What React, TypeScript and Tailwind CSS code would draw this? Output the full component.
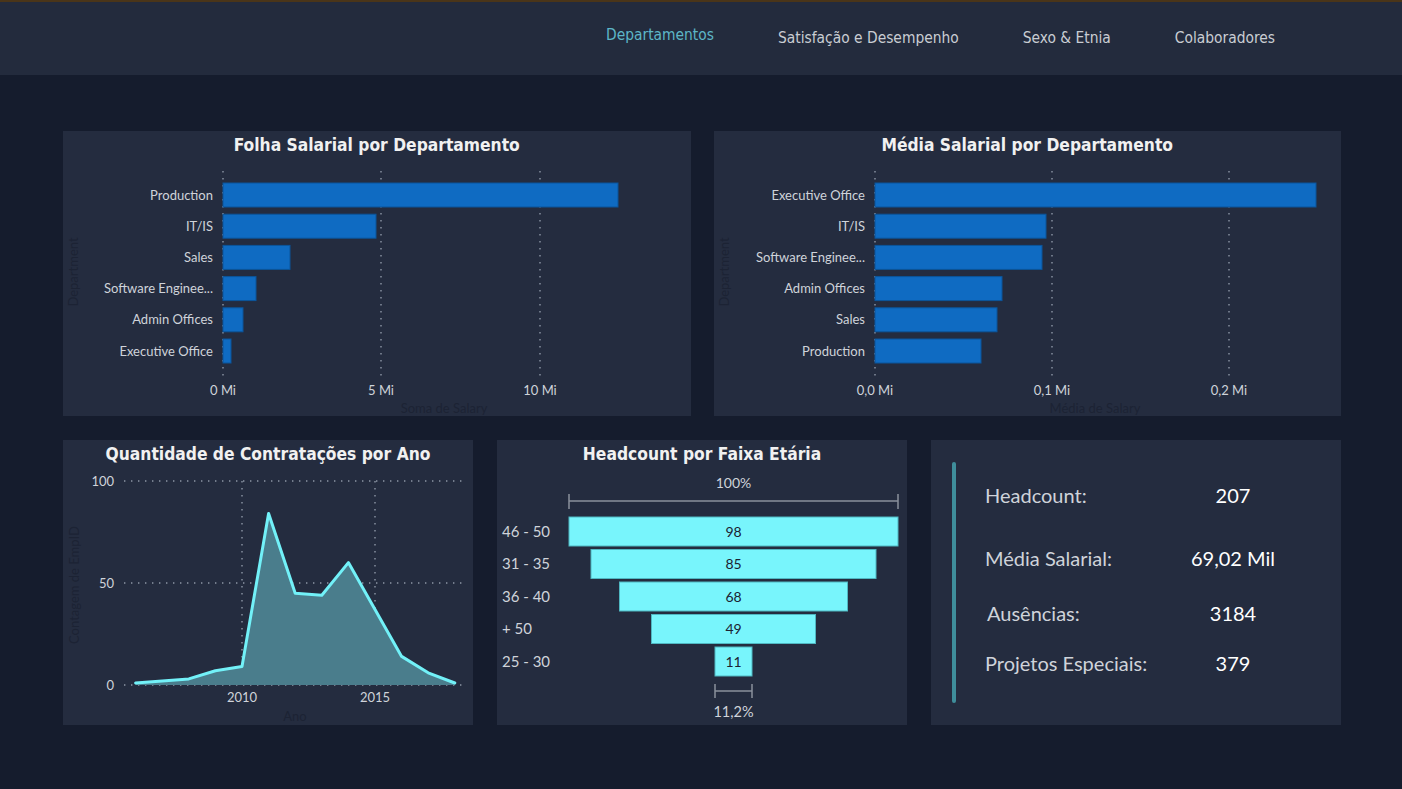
import React from "react";

const TITLE = "font-['DejaVu_Sans_Condensed','DejaVu_Sans',sans-serif] font-stretch-condensed";
const BODY = "font-['Lato','Open_Sans',sans-serif]";

type Bar = { label: string; w: number };

function HBarChart({ data, ticks, start, labelEnd, axisTitle }: {
  data: Bar[];
  ticks: { x: number; label: string }[];
  start: number;
  labelEnd: number;
  axisTitle: string;
}) {
  return (
    <svg width="628" height="255" className={BODY}>
      {ticks.map((t) => (
        <line key={t.label} x1={t.x} x2={t.x} y1={10} y2={216} stroke="#8d96a6" strokeWidth="1.4" strokeDasharray="1.4 5.6" />
      ))}
      {data.map((d, i) => {
        const y = 22 + i * 31.2;
        return (
          <g key={d.label}>
            <rect x={start} y={y} width={d.w} height={24} fill="#0f6bc2" stroke="#0b559b" strokeWidth="1" />
            <text x={labelEnd} y={y + 16.5} textAnchor="end" fontSize="13" fill="#cfd3da">{d.label}</text>
          </g>
        );
      })}
      {ticks.map((t) => (
        <text key={t.label} x={t.x} y={234} textAnchor="middle" fontSize="13" fill="#cfd3da">{t.label}</text>
      ))}
      <text x={381} y={252} textAnchor="middle" fontSize="13" fill="#1c2334">{axisTitle}</text>
      <text x={0} y={0} transform="translate(15,111) rotate(-90)" textAnchor="middle" fontSize="13" fill="#1c2334">Department</text>
    </svg>
  );
}

function Panel({ title, children, className = "" }: { title?: string; children: React.ReactNode; className?: string }) {
  return (
    <div className={`bg-[#242c3f] h-[285px] overflow-hidden ${className}`}>
      {title && (
        <div className={`h-[30px] pt-[4px] text-center text-[17.3px] leading-[20px] font-bold text-[#f1f1f1] ${TITLE}`}>{title}</div>
      )}
      {children}
    </div>
  );
}

const hires = [1, 2, 3, 7, 9, 84, 45, 44, 60, 37, 14, 6, 1];

function LineChart() {
  const px = (i: number) => 72.6 + i * 26.6;
  const py = (v: number) => 215 - 2.04 * v;
  const pts = hires.map((v, i) => `${px(i).toFixed(1)},${py(v).toFixed(1)}`);
  const line = "M" + pts.join(" L");
  const area = `${line} L${px(hires.length - 1)},215 L${px(0)},215 Z`;
  return (
    <svg width="410" height="255" className={BODY}>
      {[11, 113, 215].map((y) => (
        <line key={y} x1={61} x2={400} y1={y} y2={y} stroke="#8d96a6" strokeWidth="1.4" strokeDasharray="1.4 5.6" />
      ))}
      {[179, 312].map((x) => (
        <line key={x} x1={x} x2={x} y1={11} y2={215} stroke="#8d96a6" strokeWidth="1.4" strokeDasharray="1.4 5.6" />
      ))}
      <path d={area} fill="#4a7d8c" />
      <path d={line} fill="none" stroke="#72f1f8" strokeWidth="3" strokeLinejoin="round" strokeLinecap="round" />
      {[
        { y: 11, l: "100" },
        { y: 113, l: "50" },
        { y: 215, l: "0" },
      ].map((t) => (
        <text key={t.l} x={51} y={t.y + 4.5} textAnchor="end" fontSize="13" fill="#cfd3da">{t.l}</text>
      ))}
      <text x={179} y={232} textAnchor="middle" fontSize="13" fill="#cfd3da">2010</text>
      <text x={312} y={232} textAnchor="middle" fontSize="13" fill="#cfd3da">2015</text>
      <text x={232} y={251} textAnchor="middle" fontSize="13" fill="#1c2334">Ano</text>
      <text x={0} y={0} transform="translate(16,115) rotate(-90)" textAnchor="middle" fontSize="13" fill="#1c2334">Contagem de EmpID</text>
    </svg>
  );
}

const funnel = [
  { label: "46 - 50", v: 98, w: 329 },
  { label: "31 - 35", v: 85, w: 285 },
  { label: "36 - 40", v: 68, w: 228 },
  { label: "+ 50", v: 49, w: 164 },
  { label: "25 - 30", v: 11, w: 37 },
];

function Funnel() {
  const cx = 236.5;
  return (
    <svg width="410" height="255" className={BODY}>
      <text x={cx} y={18} textAnchor="middle" fontSize="14" fill="#cfd3da">100%</text>
      <g stroke="#8a909c" strokeWidth="1.5">
        <line x1={72} x2={401} y1={31} y2={31} />
        <line x1={72} x2={72} y1={24} y2={39} />
        <line x1={401} x2={401} y1={24} y2={39} />
      </g>
      {funnel.map((f, i) => {
        const y = 47 + i * 32.5;
        return (
          <g key={f.label}>
            <rect x={cx - f.w / 2} y={y} width={f.w} height={29} fill="#78f5fc" stroke="#4fb7c2" strokeWidth="1" />
            <text x={cx} y={y + 19.5} textAnchor="middle" fontSize="14" fill="#1b2232">{f.v}</text>
            <text x={5} y={y + 19.5} fontSize="15" fill="#cfd3da">{f.label}</text>
          </g>
        );
      })}
      <g stroke="#8a909c" strokeWidth="1.5">
        <line x1={218} x2={255} y1={221} y2={221} />
        <line x1={218} x2={218} y1={214} y2={228} />
        <line x1={255} x2={255} y1={214} y2={228} />
      </g>
      <text x={cx} y={247} textAnchor="middle" fontSize="14.5" fill="#cfd3da">11,2%</text>
    </svg>
  );
}

const kpis = [
  { label: "Headcount:", value: "207", mt: "mt-[18px]" },
  { label: "Média Salarial:", value: "69,02 Mil", mt: "mt-[33px]" },
  { label: "Ausências:", value: "3184", mt: "mt-[25px]", indent: true },
  { label: "Projetos Especiais:", value: "379", mt: "mt-[20px]" },
];

export default function App() {
  return (
    <div className="min-h-screen bg-[#151c2d]">
      <header className={`h-[75px] border-t-2 border-[#4a3519] bg-[#232b3d] flex items-center pl-[606px] gap-16 text-[15.4px] ${TITLE}`}>
        <span className="text-[#5db6c7] -mt-[5px]">Departamentos</span>
        <span className="text-[#c9cdd3] mt-[1px]">Satisfação e Desempenho</span>
        <span className="text-[#c9cdd3] mt-[1px]">Sexo &amp; Etnia</span>
        <span className="text-[#c9cdd3] mt-[1px]">Colaboradores</span>
      </header>

      <main className="pl-[63px] pr-[61px] pt-[56px] flex flex-col gap-6">
        <div className="grid grid-cols-2 gap-x-[23px]">
          <Panel title="Folha Salarial por Departamento">
            <HBarChart
              start={160}
              labelEnd={150}
              axisTitle="Soma de Salary"
              ticks={[
                { x: 160, label: "0 Mi" },
                { x: 318, label: "5 Mi" },
                { x: 477, label: "10 Mi" },
              ]}
              data={[
                { label: "Production", w: 395 },
                { label: "IT/IS", w: 153 },
                { label: "Sales", w: 67 },
                { label: "Software Enginee...", w: 33 },
                { label: "Admin Offices", w: 20 },
                { label: "Executive Office", w: 8 },
              ]}
            />
          </Panel>
          <Panel title="Média Salarial por Departamento">
            <HBarChart
              start={161}
              labelEnd={151}
              axisTitle="Média de Salary"
              ticks={[
                { x: 161, label: "0,0 Mi" },
                { x: 338, label: "0,1 Mi" },
                { x: 515, label: "0,2 Mi" },
              ]}
              data={[
                { label: "Executive Office", w: 441 },
                { label: "IT/IS", w: 171 },
                { label: "Software Enginee...", w: 167 },
                { label: "Admin Offices", w: 127 },
                { label: "Sales", w: 122 },
                { label: "Production", w: 106 },
              ]}
            />
          </Panel>
        </div>

        <div className="grid grid-cols-3 gap-6">
          <Panel title="Quantidade de Contratações por Ano">
            <LineChart />
          </Panel>
          <Panel title="Headcount por Faixa Etária">
            <Funnel />
          </Panel>
          <Panel className="flex p-[22px_0_22px_21px]">
            <div className="w-[4px] rounded-full bg-[#3f8e9b]" />
            <div className={`pl-[29px] text-[20px] ${BODY}`}>
              {kpis.map((k) => (
                <div key={k.label} className={`grid grid-cols-[198px_100px] items-center h-[30px] ${k.mt}`}>
                  <span className={`text-[#cfd3da] ${k.indent ? "pl-[2px]" : ""}`}>{k.label}</span>
                  <span className="text-center text-white">{k.value}</span>
                </div>
              ))}
            </div>
          </Panel>
        </div>
      </main>
    </div>
  );
}
